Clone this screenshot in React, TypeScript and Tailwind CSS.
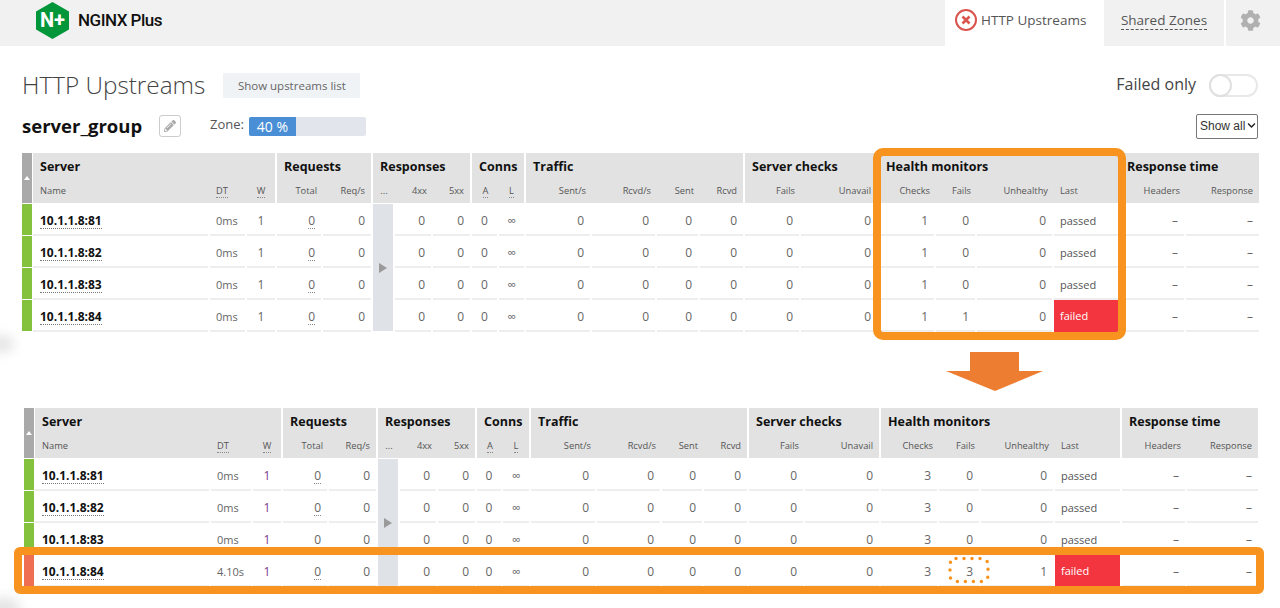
import { FaChevronDown, FaCog, FaPencilAlt } from 'react-icons/fa';

type Align = 'left' | 'right' | 'center';

const columns: { label: string; align: Align; underline?: boolean; last?: boolean }[] = [
  { label: 'Name', align: 'left' },
  { label: 'DT', align: 'left', underline: true },
  { label: 'W', align: 'center', underline: true, last: true },
  { label: 'Total', align: 'right' },
  { label: 'Req/s', align: 'right', last: true },
  { label: '...', align: 'center' },
  { label: '4xx', align: 'right' },
  { label: '5xx', align: 'right', last: true },
  { label: 'A', align: 'center', underline: true },
  { label: 'L', align: 'center', underline: true, last: true },
  { label: 'Sent/s', align: 'right' },
  { label: 'Rcvd/s', align: 'right' },
  { label: 'Sent', align: 'right' },
  { label: 'Rcvd', align: 'right', last: true },
  { label: 'Fails', align: 'right' },
  { label: 'Unavail', align: 'right', last: true },
  { label: 'Checks', align: 'right' },
  { label: 'Fails', align: 'right' },
  { label: 'Unhealthy', align: 'right' },
  { label: 'Last', align: 'left', last: true },
  { label: 'Headers', align: 'right' },
  { label: 'Response', align: 'right', last: true },
];

const alignClass: Record<Align, string> = {
  left: 'justify-start pl-1.5',
  right: 'justify-end pr-1.5',
  center: 'justify-center',
};

type Row = {
  name: string;
  dt: string;
  checks: string;
  fails: string;
  unhealthy: string;
  last: string;
  down?: boolean;
};

function BodyCell({ align, children, className }: { align: Align; children: React.ReactNode; className?: string }) {
  return (
    <div className={`mr-[2px] flex items-center border-b-2 border-[#eeeeee] pt-1 ${alignClass[align]} ${className ?? ''}`}>
      {children}
    </div>
  );
}

function UpstreamTable({ rows, grid, purple }: { rows: Row[]; grid: string; purple?: boolean }) {
  const groups = [
    { title: 'Server', span: 'col-span-3' },
    { title: 'Requests', span: 'col-span-2' },
    { title: 'Responses', span: 'col-span-3' },
    { title: 'Conns', span: 'col-span-2' },
    { title: 'Traffic', span: 'col-span-4' },
    { title: 'Server checks', span: 'col-span-2' },
    { title: 'Health monitors', span: 'col-span-4' },
    { title: 'Response time', span: 'col-span-2' },
  ];

  return (
    <div className={`grid text-xs text-[#666666] ${grid}`}>
      <div className="row-span-2 mr-px flex items-center justify-center bg-[#a9a9a9]">
        <div className="h-0 w-0 border-x-[3px] border-b-[4px] border-x-transparent border-b-white" />
      </div>
      {groups.map((g) => (
        <div
          key={g.title}
          className={`mr-[2px] flex h-[25px] items-center whitespace-nowrap bg-[#e2e2e2] pt-1 pl-[7px] text-[12.5px] font-bold text-[#111111] ${g.span}`}
        >
          {g.title}
        </div>
      ))}
      {columns.map((c, i) => (
        <div
          key={i}
          className={`flex h-[25px] items-center bg-[#e2e2e2] pt-[2px] text-[9.3px] text-[#555555] ${c.last ? 'mr-[2px]' : ''} ${
            i === 0 ? 'pl-[7px]' : alignClass[c.align]
          }`}
        >
          <span className={c.underline ? 'border-b border-dotted border-[#888888] leading-[12px]' : ''}>{c.label}</span>
        </div>
      ))}
      <div className="col-span-full h-px" />
      {rows.map((r, ri) => (
        <div key={r.name} className="contents">
          <div className={`mr-px mb-px ${r.down ? 'bg-[#ef6f53]' : 'bg-[#84c13c]'}`} />
          <div className="mr-[2px] flex items-center border-b-2 border-[#eeeeee] pt-1 pl-[7px]">
            <span className="border-b border-dotted border-[#777777] text-xs font-bold leading-[15px] text-[#111111]">
              {r.name}
            </span>
          </div>
          <BodyCell align="left" className="text-[11px]">{r.dt}</BodyCell>
          <BodyCell align="center" className={purple ? 'text-[#7a3e8e]' : ''}>1</BodyCell>
          <BodyCell align="right">
            <span className="border-b border-dotted border-[#888888] leading-[15px]">0</span>
          </BodyCell>
          <BodyCell align="right">0</BodyCell>
          {ri === 0 && (
            <div className="row-span-4 mr-[2px] mb-px flex items-center justify-center bg-[#dfe2e6]">
              <div className="h-0 w-0 border-y-[5px] border-l-[8px] border-y-transparent border-l-[#9a9a9a]" />
            </div>
          )}
          <BodyCell align="right">0</BodyCell>
          <BodyCell align="right">0</BodyCell>
          <BodyCell align="center">0</BodyCell>
          <BodyCell align="center">∞</BodyCell>
          <BodyCell align="right">0</BodyCell>
          <BodyCell align="right">0</BodyCell>
          <BodyCell align="right">0</BodyCell>
          <BodyCell align="right">0</BodyCell>
          <BodyCell align="right">0</BodyCell>
          <BodyCell align="right">0</BodyCell>
          <BodyCell align="right">{r.checks}</BodyCell>
          <BodyCell align="right">{r.fails}</BodyCell>
          <BodyCell align="right">{r.unhealthy}</BodyCell>
          {r.last === 'failed' ? (
            <div className="mr-[2px] flex items-center bg-[#f2353e] pl-1.5 text-[11px] text-white">failed</div>
          ) : (
            <BodyCell align="left" className="text-[11px] text-[#555555]">{r.last}</BodyCell>
          )}
          <BodyCell align="right">–</BodyCell>
          <BodyCell align="right">–</BodyCell>
        </div>
      ))}
    </div>
  );
}

const topRows: Row[] = [
  { name: '10.1.1.8:81', dt: '0ms', checks: '1', fails: '0', unhealthy: '0', last: 'passed' },
  { name: '10.1.1.8:82', dt: '0ms', checks: '1', fails: '0', unhealthy: '0', last: 'passed' },
  { name: '10.1.1.8:83', dt: '0ms', checks: '1', fails: '0', unhealthy: '0', last: 'passed' },
  { name: '10.1.1.8:84', dt: '0ms', checks: '1', fails: '1', unhealthy: '0', last: 'failed' },
];

const bottomRows: Row[] = [
  { name: '10.1.1.8:81', dt: '0ms', checks: '3', fails: '0', unhealthy: '0', last: 'passed' },
  { name: '10.1.1.8:82', dt: '0ms', checks: '3', fails: '0', unhealthy: '0', last: 'passed' },
  { name: '10.1.1.8:83', dt: '0ms', checks: '3', fails: '0', unhealthy: '0', last: 'passed' },
  { name: '10.1.1.8:84', dt: '4.10s', checks: '3', fails: '3', unhealthy: '1', last: 'failed', down: true },
];

export default function App() {
  return (
    <div className="relative h-[608px] w-[1280px] overflow-hidden bg-white font-['Open_Sans',sans-serif]">
      {/* top nav */}
      <nav className="flex h-[46px] items-stretch justify-between bg-[#f1f1f1]">
        <div className="ml-9 flex items-start gap-[9px] pt-[2px]">
          <svg width="33" height="37" viewBox="0 0 33 37">
            <polygon points="16.5,0 33,9.5 33,27.5 16.5,37 0,27.5 0,9.5" fill="#009639" />
            <text x="16.5" y="25" textAnchor="middle" fontFamily="Roboto, sans-serif" fontWeight="700" fontSize="20" fill="#ffffff">
              N+
            </text>
          </svg>
          <span className="mt-[6px] font-['Roboto',sans-serif] text-[17px] font-medium tracking-[-0.5px] text-[#111111]">
            NGINX Plus
          </span>
        </div>
        <div className="flex items-stretch">
          <div className="flex w-[159px] items-center gap-1 bg-white pb-1.5 pl-[10px] text-[13.5px] text-[#555555]">
            <svg width="22" height="22" viewBox="0 0 22 22" fill="none" stroke="#d9534f">
              <circle cx="11" cy="11" r="10" strokeWidth="2" />
              <path d="M7.5 7.5l7 7M14.5 7.5l-7 7" strokeWidth="2.6" />
            </svg>
            HTTP Upstreams
          </div>
          <div className="flex w-[120px] items-center justify-center pb-1.5 text-[13.5px] text-[#555555]">
            <span className="border-b border-dashed border-[#555555] leading-[18px]">Shared Zones</span>
          </div>
          <div className="flex w-[56px] items-center border-l-2 border-white pb-1.5 pl-[14px] text-[21px] text-[#b0b0b0]">
            <FaCog />
          </div>
        </div>
      </nav>

      <div className="mt-[27px] flex h-[25px] items-center justify-between px-[22px]">
        <div className="flex items-center gap-[18px]">
          <h1 className="-mt-[3px] text-[24.3px] font-light leading-[25px] text-[#444444]">HTTP Upstreams</h1>
          <button className="h-[25px] w-[137px] bg-[#f0f3f6] text-[11.5px] text-[#666666]">Show upstreams list</button>
        </div>
        <div className="flex items-center gap-[13px]">
          <span className="-mt-[3px] text-base text-[#444444]">Failed only</span>
          <div className="flex h-[23px] w-[49px] rounded-full border-2 border-[#e8e8e8]">
            <div className="-my-[2px] -ml-[2px] h-[23px] w-[23px] rounded-full border-2 border-[#e0e0e0] bg-white" />
          </div>
        </div>
      </div>

      <div className="mt-[15px] flex h-[25px] items-center justify-between px-[22px]">
        <div className="flex items-center">
          <h2 className="w-[137px] text-[18.5px] font-bold text-[#111111]">server_group</h2>
          <div className="flex h-[22px] w-[22px] items-center justify-center rounded-[3px] border border-[#cccccc] text-xs text-[#aaaaaa]">
            <FaPencilAlt />
          </div>
          <span className="-mt-[2px] ml-[29px] text-[13px] text-[#555555]">Zone:</span>
          <div className="mt-[2px] ml-[5px] flex h-[19px] w-[117px] rounded-[2px] bg-[#e2e6ec]">
            <div className="flex w-[47px] items-center justify-center rounded-l-[2px] bg-[#4a8fd6] text-sm text-white">40 %</div>
          </div>
        </div>
        <div className="relative">
          <select className="h-[25px] w-[62px] appearance-none rounded-[2px] border border-[#777777] bg-white pl-[3px] font-['Liberation_Sans',sans-serif] text-xs text-[#333333]">
            <option>Show all</option>
          </select>
          <FaChevronDown className="pointer-events-none absolute top-[9px] right-[2px] text-[9px] text-[#222222]" />
        </div>
      </div>

      <div className="mt-[15px] ml-[22px]">
        <UpstreamTable
          rows={topRows}
          grid="grid-cols-[11px_177px_37px_30px_46px_50px_22px_38px_39px_27px_27px_66px_65px_43px_45px_56px_78px_57px_41px_77px_66px_66px_75px] grid-rows-[25px_25px_1px_repeat(4,32px)]"
        />
      </div>

      <div className="mt-[76px] ml-[24px]">
        <UpstreamTable
          purple
          rows={bottomRows}
          grid="grid-cols-[11px_176px_42px_30px_46px_49px_22px_38px_39px_26px_28px_66px_65px_42px_45px_56px_76px_58px_42px_74px_67px_65px_73px] grid-rows-[25px_25px_1px_repeat(4,32px)]"
        />
      </div>

      {/* annotations drawn over the screenshot */}
      <div className="absolute top-[148px] left-[873px] h-[192px] w-[253px] rounded-[10px] border-8 border-[#f7931e]" />
      <div className="absolute top-[547px] left-[14px] h-[47px] w-[1250px] rounded-[6px] border-8 border-[#f7931e]" />
      <svg className="absolute top-[556px] left-[948px]" width="42" height="28" viewBox="0 0 42 28" fill="none">
        <rect x="2" y="2.5" width="38" height="23" rx="6" stroke="#f7931e" strokeWidth="3.5" strokeLinecap="round" strokeDasharray="0 8" />
      </svg>
      <svg className="absolute top-[352px] left-[946px]" width="97" height="39" viewBox="0 0 97 39">
        <polygon points="24,0 73,0 73,19 97,19 49,39 0,19 24,19" fill="#ed7d31" />
      </svg>
      <div className="absolute top-[336px] -left-[14px] h-[16px] w-[28px] rounded-full bg-[#e4e4e4] blur-[6px]" />
      <div className="absolute top-[598px] -left-[12px] h-[24px] w-[32px] rounded-full bg-[#e4e4e4] blur-[6px]" />
    </div>
  );
}
